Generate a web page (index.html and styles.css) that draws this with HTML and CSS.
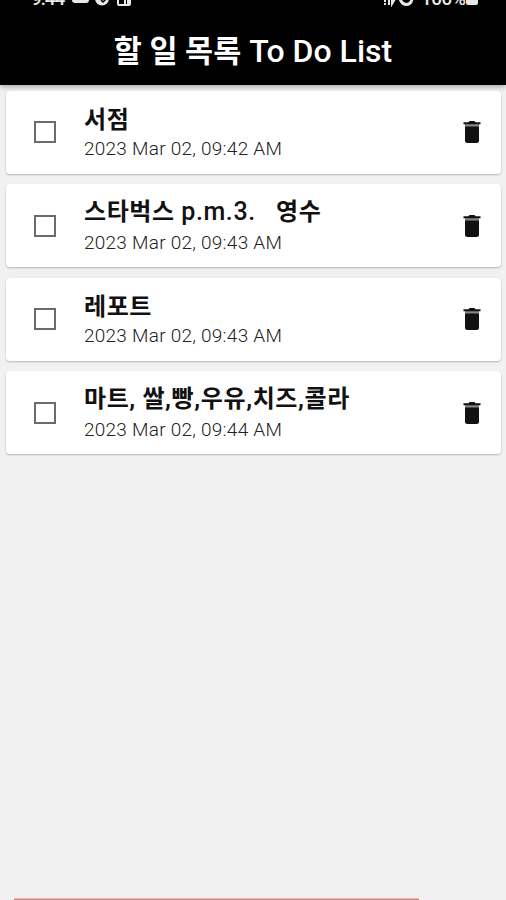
FILE: index.html
```html
<!DOCTYPE html>
<html lang="ko">
<head>
    <meta charset="UTF-8">
    <meta name="viewport" content="width=device-width, initial-scale=1.0">
    <title>할 일 목록 To Do List</title>
    <link rel="stylesheet" href="styles.css">
</head>
<body>
    <svg class="sprite" width="0" height="0">
        <symbol id="trash" viewBox="0 0 18 24">
            <path fill="#85858a" d="M2 4h14v3H2z"/>
            <path fill="#111" d="M0.5 2.2h5l1-1.2h5l1 1.2h5v2h-17zM2 6.5h14v14q0 2.500-2.500 2.500h-9q-2.500 0-2.500-2.500z"/>
        </symbol>
    </svg>
    <header>
        <div class="status-bar">
            <div class="status-left">
                <span class="time">9:44</span>
                <svg width="62" height="14" viewBox="0 0 62 14" fill="#e8e8e8">
                    <rect x="1" y="0" width="17" height="10" rx="3"/>
                    <circle cx="31" cy="5.500" r="7"/>
                    <path d="M30 7l2 2 3-3" fill="none" stroke="#000" stroke-width="1.500"/>
                    <path d="M46 0v11q0 2 2 2h10q2 0 2-2V0h-2v11H48V0z"/>
                    <path d="M53 5h2v7h-2zM56 1h2v11h-2z"/>
                </svg>
            </div>
            <div class="status-right">
                <svg width="32" height="14" viewBox="0 0 32 14" fill="none" stroke="#e8e8e8" stroke-width="2">
                    <path d="M2 5v4M2 10v2M6 3v9M9 4v7l3-5"/>
                    <path d="M17 5q1 6 6 6.500 5 0 6-5.500" stroke-width="3"/>
                </svg>
                <span class="percent">100%</span>
                <span class="battery"></span>
            </div>
        </div>
        <h1><span>할 일 목록</span> To Do List</h1>
    </header>
    <div class="todo-list">
        <div class="todo">
            <span class="checkbox"></span>
            <div class="todo-details">
                <h3>서점</h3>
                <p>2023 Mar 02, 09:42 AM</p>
            </div>
            <svg class="delete"><use href="#trash"/></svg>
        </div>
        <div class="todo low">
            <span class="checkbox"></span>
            <div class="todo-details">
                <h3>스타벅스 <span>p.m.3. &nbsp;</span> 영수</h3>
                <p>2023 Mar 02, 09:43 AM</p>
            </div>
            <svg class="delete"><use href="#trash"/></svg>
        </div>
        <div class="todo">
            <span class="checkbox"></span>
            <div class="todo-details">
                <h3>레포트</h3>
                <p>2023 Mar 02, 09:43 AM</p>
            </div>
            <svg class="delete"><use href="#trash"/></svg>
        </div>
        <div class="todo low">
            <span class="checkbox"></span>
            <div class="todo-details">
                <h3>마트, 쌀,빵,우유,치즈,콜라</h3>
                <p>2023 Mar 02, 09:44 AM</p>
            </div>
            <svg class="delete"><use href="#trash"/></svg>
        </div>
    </div>
    <div class="add-bar"></div>
</body>
</html>
```

FILE: styles.css
```css
* {
    box-sizing: border-box;
}
body {
    font-family: Roboto, "Noto Sans CJK KR", sans-serif;
    margin: 0;
    height: 900px;
    display: flex;
    flex-direction: column;
    overflow: hidden;
    background-color: #f1f1f1;
}
.sprite {
    display: none;
}
header {
    flex: none;
    height: 85px;
    background-color: #000;
    color: white;
    box-shadow: 0 2px 5px rgba(0,0,0,0.3);
}
.status-bar {
    display: flex;
    justify-content: space-between;
    height: 18px;
    padding: 0 28px 0 31px;
    overflow: hidden;
    color: #e8e8e8;
    font-size: 19px;
    font-weight: 500;
    line-height: 22px;
}
.status-left, .status-right {
    display: flex;
    margin-top: -12px;
}
.status-left svg, .status-right svg {
    margin-top: 5px;
}
.time {
    width: 40px;
    letter-spacing: -1px;
}
.percent {
    margin-left: 6px;
    width: 45px;
    letter-spacing: -0.5px;
}
.battery {
    width: 12px;
    height: 17px;
    border-radius: 2px;
    background-color: #e8e8e8;
}
h1 {
    margin: 0;
    height: 66px;
    text-align: center;
    font-size: 32px;
    font-weight: 500;
    line-height: 66px;
    white-space: nowrap;
}
h1 span {
    font-size: 30.5px;
    font-weight: 700;
}
.todo-list {
    display: flex;
    flex-direction: column;
    gap: 10.6px;
    padding: 5.5px 5px 0 6px;
}
.todo {
    display: flex;
    align-items: center;
    height: 83px;
    padding: 0 20px 0 28px;
    background-color: white;
    border-radius: 4px;
    box-shadow: 0 1px 2px rgba(0,0,0,0.25);
}
.checkbox {
    width: 22px;
    height: 22px;
    border: 2px solid #6b6b6b;
}
.todo-details {
    flex: 1;
    margin-left: 28px;
}
.todo-details h3 {
    margin: 0;
    padding-top: 1px;
    color: #111;
    font-size: 24px;
    font-weight: 700;
    line-height: 32px;
    letter-spacing: 0.6px;
    white-space: nowrap;
}
.todo-details h3 span {
    font-size: 25px;
    font-weight: 500;
}
.todo-details p {
    margin: 0;
    color: #222;
    font-size: 19px;
    font-weight: 300;
    line-height: 26px;
    letter-spacing: 0.25px;
}
.low p {
    padding-top: 2px;
}
.delete {
    width: 18px;
    height: 24px;
}
.add-bar {
    width: 405px;
    height: 2px;
    margin: auto 0 0 14px;
    border-top: 1px solid #f3b8b8;
    background-color: #d47b7f;
}
```
